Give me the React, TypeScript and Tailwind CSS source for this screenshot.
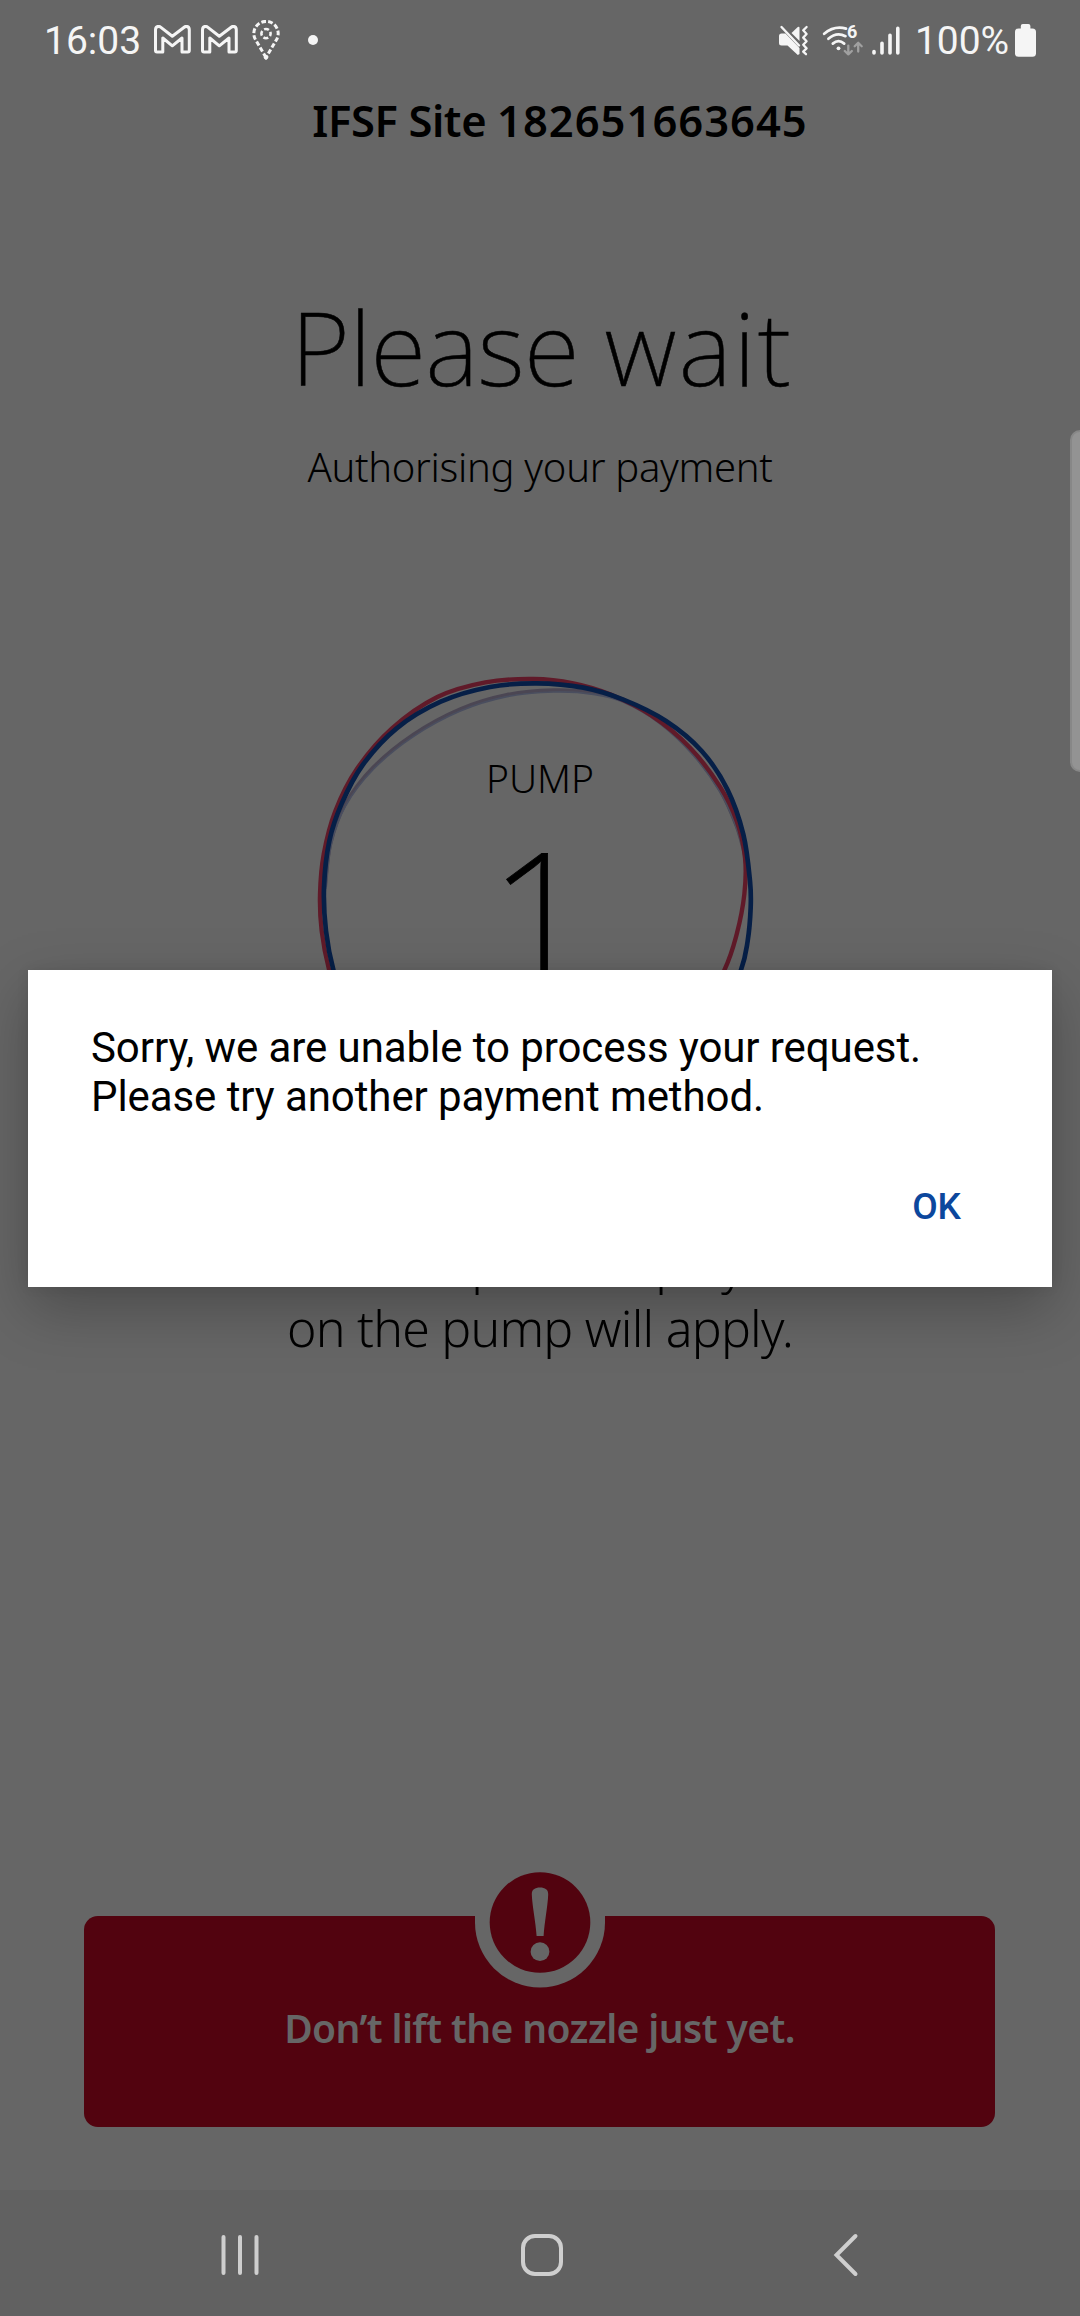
type Point = [number, number];

// Smooth open curve through a list of points (Catmull-Rom converted to cubic segments).
function curve(points: Point[]) {
  let d = `M${points[0][0]} ${points[0][1]}`;
  for (let i = 0; i < points.length - 1; i++) {
    const a = points[Math.max(i - 1, 0)];
    const b = points[i];
    const c = points[i + 1];
    const e = points[Math.min(i + 2, points.length - 1)];
    d += ` C${b[0] + (c[0] - a[0]) / 6} ${b[1] + (c[1] - a[1]) / 6} ${c[0] - (e[0] - b[0]) / 6} ${c[1] - (e[1] - b[1]) / 6} ${c[0]} ${c[1]}`;
  }
  return d;
}

const blueRing: Point[] = [
  [210, 1240], [140, 1100], [101, 990], [78, 870], [72, 740], [88, 600], [125, 488], [188, 372], [290, 262], [422, 182],
  [570, 138], [710, 127], [850, 140], [970, 176], [1098, 240], [1205, 330], [1282, 445], [1330, 580],
  [1350, 720], [1352, 800], [1343, 900], [1322, 990], [1250, 1160],
];
const redRing: Point[] = [
  [180, 1220], [125, 1100], [88, 990], [65, 870], [60, 760], [71, 640], [106, 510], [172, 382], [276, 262], [412, 168],
  [556, 124], [700, 114], [820, 127], [930, 160], [1055, 224], [1170, 320], [1260, 437], [1310, 540],
  [1335, 650], [1333, 760], [1310, 880], [1272, 990], [1180, 1160],
];
const mauveRing: Point[] = [
  [76, 740], [92, 610], [135, 492], [220, 380], [340, 282], [480, 206], [620, 163], [760, 149],
  [880, 156], [970, 180], [1080, 245], [1180, 340], [1260, 450], [1310, 560], [1338, 660],
];

function MailIcon() {
  return (
    <svg viewBox="0 0 37 29" className="h-[29px] w-[37px]" fill="none" stroke="#f5f5f5" strokeWidth="3" strokeLinejoin="round">
      <path d="M3 27 Q1.5 27 1.5 25.5 V4.8 Q1.5 1.4 4.4 1.4 Q5.6 1.4 6.6 2.2 L18.3 11.3 L30.2 2.2 Q31.2 1.4 32.3 1.4 Q35.3 1.4 35.3 4.8 V25.5 Q35.3 27 33.8 27 H28 V13 L18.3 20.8 L8.8 13 V27 Z" />
    </svg>
  );
}

function PinIcon() {
  return (
    <svg viewBox="0 0 28 40" className="h-10 w-7" fill="none" stroke="#f5f5f5" strokeLinecap="butt">
      <path d="M14 37.5 L4 20.5 Q1.8 17 1.8 13.6 A12.2 12.2 0 0 1 26.2 13.6 Q26.2 17 24 20.5 Z" strokeWidth="3" strokeDasharray="4.7 2.2" />
      <circle cx="14" cy="13.6" r="4.6" strokeWidth="2.6" strokeDasharray="5 2.22" strokeDashoffset="2.5" />
      <circle cx="14" cy="37.3" r="2.2" fill="#f5f5f5" stroke="none" />
    </svg>
  );
}

function MuteIcon() {
  return (
    <svg viewBox="0 0 31 32" className="h-8 w-[31px]">
      <path d="M1 12 Q1 9.5 3.5 9.5 H7.5 L21.5 24 V30 L19.8 31 L9.5 21.5 H3.5 Q1 21.5 1 19 Z" fill="#f5f5f5" />
      <path d="M13.5 9 L19.8 3 Q21.5 2 21.5 4 V17 Z" fill="#f5f5f5" />
      <path d="M3.5 3 L21 21.5" stroke="#f5f5f5" strokeWidth="2.4" strokeLinecap="round" />
      <path d="M28.6 3 L25.2 6.3 L28.6 10 L25.2 13.6 L28.6 17.2 L25.2 20.8 L28.6 24.4 L25.2 27.6 L28 30.2" fill="none" stroke="#f5f5f5" strokeWidth="2.3" strokeLinecap="round" strokeLinejoin="round" />
    </svg>
  );
}

function WifiIcon() {
  return (
    <div className="relative h-8 w-[42px]">
      <svg viewBox="0 0 42 32" className="h-8 w-[42px]" fill="none" strokeLinecap="round">
        <g stroke="#f5f5f5" strokeWidth="2.7">
          <path d="M2.2 9.8 Q12 1.4 24 4.6" />
          <path d="M6.4 14.8 Q14.5 7.6 23.5 12.2" />
          <path d="M10.8 19.6 Q16.5 14.8 22.2 19.6" />
        </g>
        <circle cx="16.5" cy="24.3" r="1.9" fill="#f5f5f5" />
        <g stroke="#a0a0a0" strokeWidth="2.3" strokeLinejoin="round">
          <path d="M26.3 21.6 V30.4 M22.8 27 L26.3 30.4 L29.8 27" />
          <path d="M36.2 27.6 V18.8 M32.7 22.2 L36.2 18.8 L39.7 22.2" />
        </g>
      </svg>
      <span className="absolute left-[25px] top-[-1px] font-[Roboto] text-[18px] leading-[18px] font-bold text-[#f5f5f5]">6</span>
    </div>
  );
}

function SignalIcon() {
  return (
    <svg viewBox="0 0 28 30" className="h-[30px] w-7" stroke="#f5f5f5" strokeWidth="3.6" strokeLinecap="round">
      <path d="M2 25.5 V27 M10 17.3 V27 M18 9.2 V27 M25.8 2.4 V27" />
    </svg>
  );
}

function BatteryIcon() {
  return (
    <svg viewBox="0 0 21 33" className="h-[33px] w-[21px]" fill="#f5f5f5">
      <rect x="5.8" y="0" width="9.6" height="8" rx="2" />
      <rect x="0" y="4.4" width="21" height="28.4" rx="3.6" />
    </svg>
  );
}

function StatusBar() {
  return (
    <div className="flex h-[90px] items-start pl-[44px] pr-[44px] pt-[17px] font-[Roboto] text-[39px] leading-[48px] text-[#f5f5f5]">
      <span className="w-[110px]">16:03</span>
      <div className="mt-[8px] flex gap-[10px]">
        <MailIcon />
        <MailIcon />
      </div>
      <div className="ml-[14px] mt-[3px]"><PinIcon /></div>
      <div className="ml-[28px] mt-[18px] size-[10px] rounded-full bg-[#f5f5f5]" />
      <div className="ml-auto flex items-start">
        <div className="mt-[7px]"><MuteIcon /></div>
        <div className="ml-[13px] mt-[7px]"><WifiIcon /></div>
        <div className="ml-[8px] mt-[9px]"><SignalIcon /></div>
        <span className="ml-[15px] w-[100px] whitespace-nowrap tracking-[-0.1px]">100%</span>
        <div className="mt-[7px]"><BatteryIcon /></div>
      </div>
    </div>
  );
}

function PumpDial() {
  return (
    <div className="relative mt-[144px] flex h-[591px] w-[480px] flex-col items-center pt-[107px]">
      <svg viewBox="0 0 1440 1320" className="absolute left-0 top-0 h-[440px] w-[480px]" fill="none">
        <path d={curve(mauveRing)} stroke="#4b4653" strokeWidth="10" transform="translate(0 -2)" />
        <path d={curve(mauveRing)} stroke="#4a4e5f" strokeWidth="5" transform="translate(1 4)" />
        <path d={curve(redRing)} stroke="#601a29" strokeWidth="13" />
        <path d={curve(blueRing)} stroke="#061f47" strokeWidth="14" />
      </svg>
      <p className="relative text-[39px] leading-[60px] font-light">PUMP</p>
      <p className="relative mt-[5px] text-[180px] leading-[200px] font-extralight [-webkit-text-stroke:0.8px_black]">1</p>
    </div>
  );
}

function Warning() {
  return (
    <div className="relative ml-[84px] mt-[556px] h-[211px] w-[911px] rounded-[14px] bg-[#52030f] pt-[82px] text-center">
      <svg viewBox="0 0 130 118" className="absolute left-[391px] top-[-46px] h-[118px] w-[130px]">
        <path d="M0 46 H130 V52.5 A65 65 0 0 1 0 52.5 Z" fill="#666" />
        <circle cx="65" cy="52.5" r="50.3" fill="#52030f" />
        <path d="M56.8 24.5 C56.6 19.5 60 17.5 65 17.5 C70 17.5 73.4 19.5 73.2 24.5 C72.8 36 69.5 52 68.6 66 H61.6 C60.7 52 57.2 36 56.8 24.5 Z" fill="#666" />
        <circle cx="65" cy="81.7" r="9.4" fill="#666" />
      </svg>
      <p className="text-[39px] leading-[60px] font-semibold tracking-[-0.6px] text-[#666]">Don’t lift the nozzle just yet.</p>
    </div>
  );
}

function NavBar() {
  return (
    <div className="flex h-[126px] items-center bg-[#616161] pt-[4px]">
      <svg viewBox="0 0 40 42" className="ml-[220px] h-[42px] w-10" stroke="#cfcfcf" strokeWidth="4" strokeLinecap="round">
        <path d="M3.5 3 V39 M20 3 V39 M36.5 3 V39" />
      </svg>
      <div className="ml-[261px] h-[42px] w-[42px] rounded-[14px] border-[4px] border-[#cfcfcf]" />
      <svg viewBox="0 0 26 44" className="ml-[270px] h-11 w-[26px]" fill="none" stroke="#cfcfcf" strokeWidth="4" strokeLinecap="round" strokeLinejoin="miter">
        <path d="M22.5 3 L3.5 22 L22.5 41" />
      </svg>
    </div>
  );
}

function ErrorDialog() {
  return (
    <div className="absolute left-[28px] top-[970px] flex h-[317px] w-[1024px] flex-col bg-white px-[63px] pt-[53px] font-[Roboto] shadow-[0_22px_56px_rgba(0,0,0,0.26),0_0_12px_rgba(0,0,0,0.08)]">
      <p className="text-[42px] leading-[49px] tracking-[-0.08px] text-black">
        Sorry, we are unable to process your request.
        <br />
        Please try another payment method.
      </p>
      <button className="mr-[28px] mt-[64px] self-end text-[37px] leading-[44px] font-medium text-[#0c479d]">OK</button>
    </div>
  );
}

export default function App() {
  return (
    <div className="relative flex h-[2316px] w-[1080px] flex-col overflow-hidden bg-[#666] font-['Noto_Sans',sans-serif] text-black">
      <StatusBar />
      <h1 className="pl-[40px] text-center text-[43.5px] leading-[60px] font-semibold">
        <span className="tracking-[-0.4px]">IFSF Site </span>
        <span className="tracking-[1px]">182651663645</span>
      </h1>
      <main className="flex flex-1 flex-col">
        <h2 className="mt-[137px] pl-[4px] text-center text-[102px] leading-[120px] font-extralight [-webkit-text-stroke:0.5px_black]">
          <span className="tracking-[-0.8px]">Please </span>
          <span className="tracking-[2px]">wait</span>
        </h2>
        <p className="mt-[30px] text-center text-[40px] leading-[60px] font-light tracking-[-0.3px]">Authorising your payment</p>
        <div className="flex justify-center"><PumpDial /></div>
        <p className="text-center text-[50px] leading-[64px] font-light tracking-[-0.77px]">
          The unit price displayed
          <br />
          on the pump will apply.
        </p>
        <Warning />
      </main>
      <NavBar />
      <ErrorDialog />
      <div className="absolute right-[-10px] top-[430px] h-[342px] w-5 rounded-[10px] border-2 border-[#878787] bg-[#939393]" />
    </div>
  );
}
